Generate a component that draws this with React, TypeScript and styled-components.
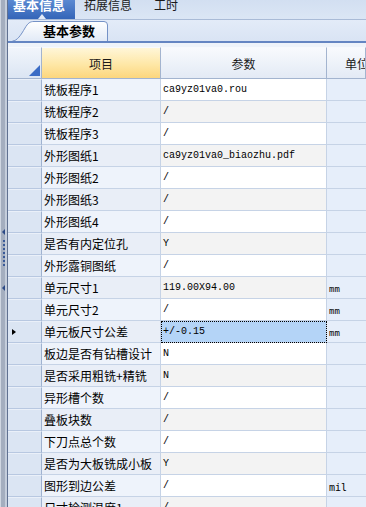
import React from "react";
import styled, { createGlobalStyle } from "styled-components";

const Global = createGlobalStyle`
  html, body { margin: 0; padding: 0; background: #ffffff; }
  * { box-sizing: border-box; }
`;

const CJK = `"Noto Sans CJK SC", "Noto Sans", sans-serif`;
const MONO = `"Liberation Mono", "Noto Sans CJK SC", monospace`;

const Frame = styled.div`
  width: 366px;
  height: 507px;
  overflow: hidden;
  display: flex;
  background: #eef3fa;
`;

const Splitter = styled.div`
  flex: 0 0 8px;
  display: flex;
  flex-direction: column;
  align-items: flex-start;
  padding: 229px 0 0 2px;
  background: linear-gradient(
    to right,
    #cfd6e1 0,
    #cfd6e1 1px,
    #a4aebf 1px,
    #a4aebf 5px,
    #c4cddb 5px,
    #c4cddb 7px,
    #607191 7px
  );
`;

const SplitArrow = styled.div`
  width: 0;
  height: 0;
  border-top: 3px solid transparent;
  border-bottom: 3px solid transparent;
  border-right: 3px solid #2c4a86;
`;

const SplitDots = styled.div`
  width: 2px;
  height: 28px;
  margin: 5px 0 17px 1px;
  background: repeating-linear-gradient(to bottom, #3a5a98 0, #3a5a98 2px, transparent 2px, transparent 4px);
`;

const Main = styled.div`
  flex: 1;
  display: flex;
  flex-direction: column;
  min-width: 0;
`;

const TopTabs = styled.div`
  height: 20px;
  flex: 0 0 20px;
  display: flex;
  align-items: stretch;
  background: linear-gradient(#d2dff1, #dbe6f5);
  border-bottom: 1px solid #a9bbd7;
  overflow: hidden;
`;

const TopTab = styled.div<{ $active?: boolean; $ml?: number }>`
  position: relative;
  width: ${(p) => (p.$active ? "67px" : "auto")};
  margin-left: ${(p) => p.$ml ?? 0}px;
  padding-left: ${(p) => (p.$active ? "5px" : "0")};
  font-family: ${CJK};
  font-size: ${(p) => (p.$active ? "13px" : "12px")};
  font-weight: ${(p) => (p.$active ? 700 : 400)};
  line-height: 14px;
  color: ${(p) => (p.$active ? "#ffffff" : "#1b1b1b")};
  background: ${(p) => (p.$active ? "linear-gradient(#5a89d2, #3465b8)" : "transparent")};
  white-space: nowrap;
  & > span {
    display: block;
    margin-top: -2px;
  }
  ${(p) =>
    p.$active &&
    `
    &::after {
      content: "";
      position: absolute;
      left: 30px;
      bottom: 0;
      border-left: 4px solid transparent;
      border-right: 4px solid transparent;
      border-bottom: 5px solid #e3ebf7;
    }
  `}
`;

const SubTabBar = styled.div`
  flex: 0 0 23px;
  height: 23px;
  display: flex;
  align-items: flex-end;
  padding-left: 4px;
  background: linear-gradient(#e3ebf8, #d9e4f4);
  border-bottom: 2px solid #6485c2;
`;

const SubTab = styled.div`
  position: relative;
  width: 96px;
  height: 21px;
  padding-left: 31px;
  font-family: ${CJK};
  font-size: 13px;
  font-weight: 700;
  line-height: 21px;
  color: #000;
  & > svg {
    position: absolute;
    left: 0;
    top: 0;
  }
  & > span {
    position: relative;
  }
`;

const GridArea = styled.div`
  flex: 1;
  padding-top: 4px;
  background: #eef3fa;
  display: flex;
  flex-direction: column;
`;

const Row = styled.div<{ $h: number }>`
  display: grid;
  grid-template-columns: 34px 119px 166px 1fr;
  height: ${(p) => p.$h}px;
  flex: 0 0 ${(p) => p.$h}px;
`;

const HeadCell = styled.div<{ $variant?: "corner" | "active" | "plain"; $start?: boolean }>`
  display: flex;
  align-items: center;
  justify-content: ${(p) => (p.$variant === "corner" ? "flex-end" : p.$start ? "flex-start" : "center")};
  padding-left: ${(p) => (p.$start ? "18px" : "0")};
  ${(p) => p.$variant === "corner" && "align-items: flex-end; padding: 0 1px 2px 0;"}
  font-family: ${CJK};
  font-size: 12px;
  color: #1a1a1a;
  white-space: nowrap;
  overflow: hidden;
  border-right: 1px solid #a3b4cf;
  border-bottom: 1px solid #a3b4cf;
  border-top: 1px solid #f7f9fd;
  background: ${(p) =>
    p.$variant === "active"
      ? "linear-gradient(#fff6d8, #fee7a6 55%, #fcd67d)"
      : p.$variant === "corner"
      ? "linear-gradient(#f1f5fb, #dbe5f3)"
      : "linear-gradient(#f8fafd, #e3eaf5)"};
`;

const CornerMark = styled.div`
  width: 0;
  height: 0;
  border-left: 11px solid transparent;
  border-bottom: 11px solid #3b6cc5;
`;

const RowHead = styled.div`
  display: flex;
  align-items: center;
  padding-left: 4px;
  background: #dbe5f3;
  border-right: 1px solid #9fb2d0;
  border-bottom: 1px solid #b8c8e1;
  border-top: 1px solid #eaf0f9;
`;

const RowPointer = styled.div`
  width: 0;
  height: 0;
  border-top: 3px solid transparent;
  border-bottom: 3px solid transparent;
  border-left: 4px solid #000;
`;

const LabelCell = styled.div<{ $alt: boolean }>`
  display: flex;
  align-items: center;
  padding-left: 2px;
  font-family: ${CJK};
  font-size: 12px;
  color: #000;
  white-space: nowrap;
  overflow: hidden;
  background: ${(p) => (p.$alt ? "#e9eef7" : "#eef3fb")};
  border-right: 1px solid #c6d3e6;
  border-bottom: 1px solid #c6d3e6;
`;

const ValueCell = styled.div<{ $alt: boolean; $selected?: boolean }>`
  display: flex;
  align-items: center;
  padding-left: 2px;
  font-family: ${MONO};
  font-size: 10px;
  color: #000;
  white-space: nowrap;
  overflow: hidden;
  background: ${(p) => (p.$selected ? "#b4d4f7" : p.$alt ? "#f3f3f3" : "#ffffff")};
  border-right: 1px solid #c6d3e6;
  border-bottom: 1px solid #c6d3e6;
  ${(p) => p.$selected && "outline: 1px dotted #000; outline-offset: -1px;"}
`;

const UnitCell = styled.div<{ $wide?: boolean }>`
  display: flex;
  align-items: center;
  padding: 3px 0 0 2px;
  font-family: "DejaVu Sans Mono", monospace;
  font-size: ${(p) => (p.$wide ? "10px" : "9px")};
  color: #000;
  white-space: nowrap;
  overflow: hidden;
  background: #e6eefa;
  border-bottom: 1px solid #c6d3e6;
`;

type Item = { label: string; value: string; unit?: string };

const rows: Item[] = [
  { label: "铣板程序1", value: "ca9yz01va0.rou" },
  { label: "铣板程序2", value: "/" },
  { label: "铣板程序3", value: "/" },
  { label: "外形图纸1", value: "ca9yz01va0_biaozhu.pdf" },
  { label: "外形图纸2", value: "/" },
  { label: "外形图纸3", value: "/" },
  { label: "外形图纸4", value: "/" },
  { label: "是否有内定位孔", value: "Y" },
  { label: "外形露铜图纸", value: "/" },
  { label: "单元尺寸1", value: "119.00X94.00", unit: "mm" },
  { label: "单元尺寸2", value: "/", unit: "mm" },
  { label: "单元板尺寸公差", value: "+/-0.15", unit: "mm" },
  { label: "板边是否有钻槽设计", value: "N" },
  { label: "是否采用粗铣+精铣", value: "N" },
  { label: "异形槽个数", value: "/" },
  { label: "叠板块数", value: "/" },
  { label: "下刀点总个数", value: "/" },
  { label: "是否为大板铣成小板", value: "Y" },
  { label: "图形到边公差", value: "/", unit: "mil" },
  { label: "尺寸检测温度1", value: "/" },
];

const SELECTED = 11;

export default function App() {
  return (
    <>
      <Global />
      <Frame>
        <Splitter>
          <SplitArrow />
          <SplitDots />
          <SplitArrow />
        </Splitter>
        <Main>
          <TopTabs>
            <TopTab $active>
              <span>基本信息</span>
            </TopTab>
            <TopTab $ml={9}>
              <span>拓展信息</span>
            </TopTab>
            <TopTab $ml={22}>
              <span>工时</span>
            </TopTab>
          </TopTabs>
          <SubTabBar>
            <SubTab>
              <svg width="97" height="21" viewBox="0 0 97 21">
                <defs>
                  <linearGradient id="tabfill" x1="0" y1="0" x2="0" y2="1">
                    <stop offset="0" stopColor="#ffffff" />
                    <stop offset="1" stopColor="#e2eaf6" />
                  </linearGradient>
                </defs>
                <path
                  d="M0.5 21 C5 21 9 15 13 8 C16 3 18 1.5 22 1.5 L92 1.5 Q95.5 1.5 95.5 5 L95.5 21"
                  fill="url(#tabfill)"
                  stroke="#7592c6"
                  strokeWidth="1"
                />
              </svg>
              <span>基本参数</span>
            </SubTab>
          </SubTabBar>
          <GridArea>
            <Row $h={32}>
              <HeadCell $variant="corner">
                <CornerMark />
              </HeadCell>
              <HeadCell $variant="active">项目</HeadCell>
              <HeadCell $variant="plain">参数</HeadCell>
              <HeadCell $variant="plain" $start>
                单位
              </HeadCell>
            </Row>
            {rows.map((r, i) => (
              <Row $h={22} key={i}>
                <RowHead>{i === SELECTED && <RowPointer />}</RowHead>
                <LabelCell $alt={i % 2 === 1}>{r.label}</LabelCell>
                <ValueCell $alt={i % 2 === 1} $selected={i === SELECTED}>
                  {r.value}
                </ValueCell>
                <UnitCell $wide={r.unit === "mil"}>{r.unit ?? ""}</UnitCell>
              </Row>
            ))}
          </GridArea>
        </Main>
      </Frame>
    </>
  );
}
